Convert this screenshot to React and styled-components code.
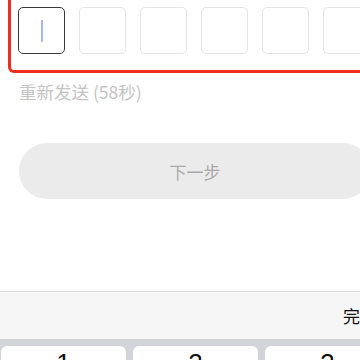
import React from 'react';
import styled, { createGlobalStyle } from 'styled-components';

const GlobalStyle = createGlobalStyle`
  html, body {
    margin: 0;
    padding: 0;
    background: #ffffff;
    overflow: hidden;
  }
  body {
    font-family: "Noto Sans CJK SC", "Noto Sans", sans-serif;
  }
`;

// whole phone screen, wider than the window like the capture
const Screen = styled.div`
  width: 390px;
  height: 360px;
  display: flex;
  flex-direction: column;
  overflow: hidden;
  & > * {
    flex: none;
  }
`;

// red highlight around the code inputs
const CodeFrame = styled.div`
  margin-left: 8px;
  width: 374px;
  height: 73px;
  box-sizing: border-box;
  border: 3px solid #f02c1e;
  border-top: none;
  border-radius: 0 0 6px 6px;
  padding: 7px 0 0 7px;
  display: flex;
  gap: 14px;
`;

const CodeBox = styled.div`
  width: 47px;
  height: 47px;
  box-sizing: border-box;
  flex: none;
  border: 1.5px solid ${p => (p.$active ? '#3a3a3a' : '#e4e4e4')};
  border-radius: 5px;
  display: flex;
  align-items: center;
  justify-content: center;
`;

const Caret = styled.span`
  width: 2px;
  height: 22px;
  background: #a9b7ee;
`;

const Resend = styled.div`
  margin: 8px 0 0 19px;
  font-size: 17.5px;
  line-height: 22px;
  color: #c4c4c4;
`;

const NextButton = styled.button`
  margin: 40px 0 0 19px;
  width: 352px;
  height: 56px;
  border: none;
  border-radius: 28px;
  background: #ebebeb;
  color: #a9a9a9;
  font-family: inherit;
  font-size: 17px;
`;

const Keyboard = styled.div`
  margin-top: 92px;
`;

const Toolbar = styled.div`
  height: 48px;
  box-sizing: border-box;
  border-top: 1px solid #dedede;
  background: #f6f6f6;
  display: flex;
  align-items: center;
  justify-content: flex-end;
  padding-right: 13px;
  font-size: 17px;
  color: #111111;
`;

const KeyPad = styled.div`
  background: #d2d4da;
  padding: 7px 1px 0 1px;
  display: grid;
  grid-template-columns: repeat(3, 125px);
  gap: 7px;
  height: 60px;
`;

const Key = styled.div`
  background: #ffffff;
  border-radius: 6px;
  height: 48px;
  display: flex;
  justify-content: center;
  padding-top: 2px;
  font-family: "Liberation Sans", sans-serif;
  font-size: 26px;
  color: #111111;
`;

export default function App() {
  const codes = [0, 1, 2, 3, 4, 5];
  return (
    <>
      <GlobalStyle />
      <Screen>
        <CodeFrame>
          {codes.map(i => (
            <CodeBox key={i} $active={i === 0}>
              {i === 0 && <Caret />}
            </CodeBox>
          ))}
        </CodeFrame>
        <Resend>重新发送 (58秒)</Resend>
        <NextButton>下一步</NextButton>
        <Keyboard>
          <Toolbar>完成</Toolbar>
          <KeyPad>
            <Key>1</Key>
            <Key>2</Key>
            <Key>3</Key>
          </KeyPad>
        </Keyboard>
      </Screen>
    </>
  );
}
